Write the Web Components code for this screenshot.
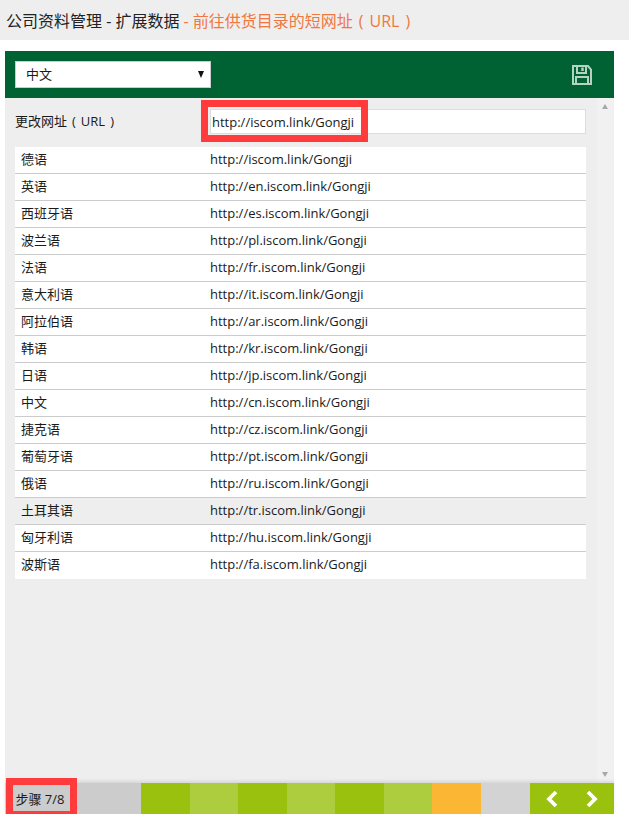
<!DOCTYPE html>
<html lang="zh">
<head>
<meta charset="utf-8">
<style>
  html, body { margin: 0; background: #fff; }
  body { font-family: "Open Sans", "Noto Sans CJK SC", sans-serif; font-size: 13px; color: #1a1a1a; }
</style>
</head>
<body>
<template id="row-tpl">
  <style>
    :host { display: grid; grid-template-columns: 195px 1fr; height: 26px; line-height: 25px; background: #fff; border-bottom: 1px solid #ccc; }
    :host(:last-child) { border-bottom: none; height: 27px; }
    :host([alt]) { background: #eee; }
    .name { padding-left: 6px; }
  </style>
  <div class="name"><slot name="lang"></slot></div>
  <div class="url"><slot name="url"></slot></div>
</template>

<page-title></page-title>
<url-panel></url-panel>
<step-bar></step-bar>

<script>
class PageTitle extends HTMLElement {
  connectedCallback() {
    this.attachShadow({mode: 'open'})
    this.shadowRoot.innerHTML = `
      <style>
        :host { display: flex; align-items: center; height: 40px; background: #eee; padding-left: 6px; font-size: 16px; color: #222; white-space: nowrap; margin-bottom: 11px; }
        span { color: #f0773f; margin-left: 4px; }
        i { font-style: normal; margin: 0 6px; }
      </style>
      <div>公司资料管理 - 扩展数据<span>- 前往供货目录的短网址<i>(</i>URL<i>)</i></span></div>`
  }
}

class LangRow extends HTMLElement {
  connectedCallback() {
    this.attachShadow({mode: 'open'})
    this.shadowRoot.appendChild(document.getElementById('row-tpl').content.cloneNode(true))
  }
}

class UrlPanel extends HTMLElement {
  connectedCallback() {
    this.attachShadow({mode: 'open'})
    this.shadowRoot.innerHTML = `
      <style>
        :host { display: block; margin: 0 15px 0 5px; }
        .bar { display: flex; align-items: center; justify-content: space-between; height: 47px; background: #006232; padding: 0 21px 0 10px; }
        .select { position: relative; box-sizing: border-box; width: 196px; height: 27px; line-height: 25px; background: #fff; border: 1px solid #ccc; padding-left: 10px; color: #1a1a1a; }
        .select::after { content: ""; position: absolute; right: 6px; top: 9px; border: 3.5px solid transparent; border-top: 7px solid #111; border-bottom: 0; }
        .save { display: block; width: 22px; height: 22px; }
        .body { display: flex; height: 685px; background: #eee; }
        .main { flex: 1; padding: 11px 11px 0 10px; }
        .edit { position: relative; display: grid; grid-template-columns: 195px 1fr; align-items: center; height: 25px; margin-bottom: 13px; }
        .edit .label { padding-bottom: 2px; }
        .edit i { font-style: normal; margin: 0 5px; }
        .edit input { box-sizing: border-box; width: 100%; height: 25px; border: 1px solid #ddd; background: #fff; padding: 0 0 0 1px; font: inherit; color: #1a1a1a; outline: none; }
        .mark { position: absolute; left: 186px; top: -9px; width: 153px; height: 28px; border: 7px solid #ff3b3b; pointer-events: none; }
        .scroll { position: relative; width: 17px; background: #f1f1f1; }
        .scroll::before, .scroll::after { content: ""; position: absolute; left: 5px; border: 3.5px solid transparent; }
        .scroll::before { top: 6px; border-top: 0; border-bottom: 5px solid #a8a8a8; }
        .scroll::after { bottom: 6px; border-bottom: 0; border-top: 5px solid #a8a8a8; }
      </style>
      <div class="bar">
        <div class="select">中文</div>
        <svg class="save" viewBox="0 0 22 22" fill="none" stroke="#b5d3c3" stroke-width="2">
          <path d="M2 2h15l3 3.500v14.500h-18z"/>
          <path d="M6 2v7h9v-7"/>
          <path d="M5 20v-7h12v7"/>
          <path d="M11.500 3.500v3.500" stroke-width="2.500"/>
        </svg>
      </div>
      <div class="body">
        <div class="main">
          <div class="edit">
            <div class="label">更改网址<i>(</i>URL<i>)</i></div>
            <input value="http://iscom.link/Gongji">
            <div class="mark"></div>
          </div>
          <slot></slot>
        </div>
        <div class="scroll"></div>
      </div>`
    const rows = [
      ['德语', 'iscom'], ['英语', 'en.iscom'], ['西班牙语', 'es.iscom'], ['波兰语', 'pl.iscom'],
      ['法语', 'fr.iscom'], ['意大利语', 'it.iscom'], ['阿拉伯语', 'ar.iscom'], ['韩语', 'kr.iscom'],
      ['日语', 'jp.iscom'], ['中文', 'cn.iscom'], ['捷克语', 'cz.iscom'], ['葡萄牙语', 'pt.iscom'],
      ['俄语', 'ru.iscom'], ['土耳其语', 'tr.iscom'], ['匈牙利语', 'hu.iscom'], ['波斯语', 'fa.iscom']
    ]
    rows.forEach(([lang, host]) => {
      const row = document.createElement('lang-row')
      if (lang === '土耳其语') row.setAttribute('alt', '')
      row.innerHTML = `<span slot="lang">${lang}</span><span slot="url">http://${host}.link/Gongji</span>`
      this.appendChild(row)
    })
  }
}

class StepBar extends HTMLElement {
  connectedCallback() {
    this.attachShadow({mode: 'open'})
    this.shadowRoot.innerHTML = `
      <style>
        :host { display: flex; height: 31px; margin: 0 15px 0 5px; box-shadow: 0 -2px 3px rgba(0,0,0,.1); position: relative; }
        .label { position: relative; box-sizing: border-box; width: 72px; padding-right: 2px; background: #ccc; display: flex; align-items: center; justify-content: center; color: #1a1a1a; }
        .mark { position: absolute; left: 1px; top: -5px; width: 57px; height: 26px; border: 7px solid #ff3b3b; pointer-events: none; }
        .gap { width: 64px; background: #ccc; }
        .a { width: 49px; background: #99c10d; }
        .b { width: 48px; background: #aecd3e; }
        .cur { width: 49px; background: #fbb634; }
        .todo { width: 49px; background: #d3d3d3; }
        .nav { flex: 1; background: #99c10d; display: flex; align-items: center; justify-content: space-between; padding: 0 15px; }
        svg { display: block; width: 14px; height: 18px; }
      </style>
      <div class="label">步骤 7/8<div class="mark"></div></div>
      <div class="gap"></div>
      <div class="a"></div><div class="b"></div><div class="a"></div><div class="b"></div>
      <div class="a"></div><div class="b"></div><div class="cur"></div><div class="todo"></div>
      <div class="nav">
        <svg viewBox="0 0 14 18" fill="none" stroke="#fff" stroke-width="3.800"><path d="M11 2l-7 7 7 7"/></svg>
        <svg viewBox="0 0 14 18" fill="none" stroke="#fff" stroke-width="3.800"><path d="M3 2l7 7-7 7"/></svg>
      </div>`
  }
}

customElements.define('page-title', PageTitle)
customElements.define('lang-row', LangRow)
customElements.define('url-panel', UrlPanel)
customElements.define('step-bar', StepBar)
</script>
</body>
</html>
